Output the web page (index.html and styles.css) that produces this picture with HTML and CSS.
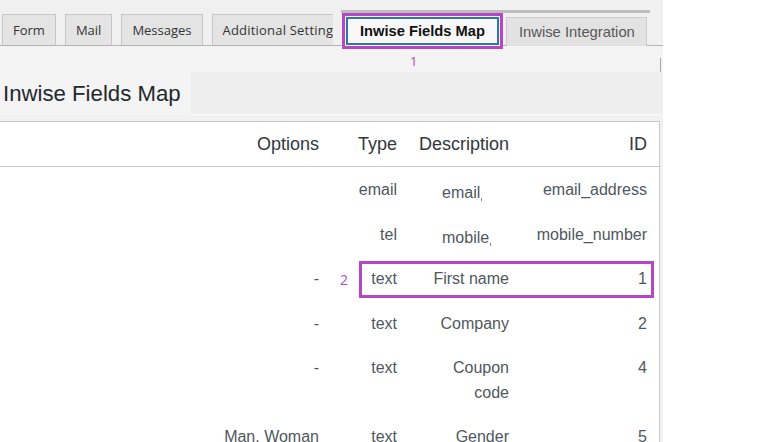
FILE: index.html
```html
<!DOCTYPE html>
<html lang="en">
<head>
<meta charset="utf-8">
<title>Inwise Fields Map</title>
<link rel="stylesheet" href="styles.css">
</head>
<body>
<div class="page">
  <div class="tabbar">
    <div class="tabs-left">
      <span class="tab">Form</span>
      <span class="tab">Mail</span>
      <span class="tab">Messages</span>
      <span class="tab tab-cut">Additional Setting</span>
    </div>
    <div class="tabs-right">
      <div class="mark-frame">
        <span class="tab-active">Inwise Fields Map</span>
      </div>
      <span class="tab-plain">Inwise Integration</span>
    </div>
  </div>
  <div class="subbar">
    <span class="marker marker-1">1</span>
    <span class="vline"></span>
  </div>
  <div class="titlerow">
    <h1 class="title">Inwise Fields Map</h1>
    <div class="title-fill"></div>
  </div>
  <div class="table-wrap">
    <table class="fields">
      <thead>
        <tr>
          <th class="c-opt">Options</th>
          <th class="c-type">Type</th>
          <th class="c-desc">Description</th>
          <th class="c-id">ID</th>
        </tr>
      </thead>
      <tbody>
        <tr>
          <td class="c-opt"></td>
          <td class="c-type">email</td>
          <td class="c-desc"><span class="edit">email</span></td>
          <td class="c-id">email_address</td>
        </tr>
        <tr>
          <td class="c-opt"></td>
          <td class="c-type">tel</td>
          <td class="c-desc"><span class="edit">mobile</span></td>
          <td class="c-id">mobile_number</td>
        </tr>
        <tr>
          <td class="c-opt">-</td>
          <td class="c-type">text</td>
          <td class="c-desc">First name</td>
          <td class="c-id">1</td>
        </tr>
        <tr>
          <td class="c-opt">-</td>
          <td class="c-type">text</td>
          <td class="c-desc">Company</td>
          <td class="c-id">2</td>
        </tr>
        <tr>
          <td class="c-opt">-</td>
          <td class="c-type">text</td>
          <td class="c-desc">Coupon code</td>
          <td class="c-id">4</td>
        </tr>
        <tr>
          <td class="c-opt">Man, Woman</td>
          <td class="c-type">text</td>
          <td class="c-desc">Gender</td>
          <td class="c-id">5</td>
        </tr>
      </tbody>
    </table>
    <span class="marker marker-2">2</span>
    <div class="highlight"></div>
  </div>
</div>
</body>
</html>
```
FILE: styles.css
```css
html, body {
  margin: 0;
  padding: 0;
  background: #ffffff;
}

.page {
  width: 663px;
  min-height: 442px;
  background: #f1f1f1;
  overflow: hidden;
  font-family: "Liberation Sans", Arial, sans-serif;
}

/* ---------- tabs ---------- */
.tabbar {
  display: flex;
  align-items: flex-end;
  height: 45px;
  border-bottom: 1px solid #b4b4b4;
  background: #f0f0f0;
}

.tabs-left {
  display: flex;
  align-items: flex-end;
  gap: 9px;
  width: 331px;
  padding-left: 2px;
  height: 45px;
  overflow: hidden;
  flex: none;
}

.tab {
  flex: none;
  box-sizing: border-box;
  height: 31px;
  padding: 0 10px;
  display: flex;
  align-items: center;
  background: #e4e4e4;
  border: 1px solid #c7c7c7;
  border-bottom: none;
  font-family: "Open Sans", "Noto Sans", sans-serif;
  font-size: 13px;
  color: #333333;
  white-space: nowrap;
}

.tab-cut {
  padding-right: 1px;
  letter-spacing: 0.2px;
}

.tabs-right {
  flex: none;
  display: flex;
  align-items: flex-start;
  gap: 3px;
  width: 309px;
  height: 32px;
  margin-left: 8px;
  align-self: flex-start;
  margin-top: 10px;
  border-top: 3px solid #bebebe;
}

.mark-frame {
  position: relative;
  z-index: 2;
  margin-left: 1px;
  box-sizing: border-box;
  height: 36px;
  padding: 1px;
  border: 3px solid #b646c3;
  background: #f4f4f4;
}

.tab-active {
  box-sizing: border-box;
  display: flex;
  align-items: center;
  height: 28px;
  padding: 0 12px 0 12px;
  border: 2px solid #2f75b5;
  background: #f8f8f8;
  font-size: 14.7px;
  font-weight: bold;
  color: #111111;
  white-space: nowrap;
}

.tab-plain {
  box-sizing: border-box;
  display: flex;
  align-items: center;
  margin-top: 4px;
  height: 29px;
  padding: 0 11px 0 12px;
  background: #e2e2e2;
  border: 1px solid #cbcbcb;
  border-bottom: none;
  font-size: 14.8px;
  color: #585858;
  white-space: nowrap;
}

/* ---------- sub bar ---------- */
.subbar {
  display: flex;
  align-items: flex-end;
  height: 26px;
  background: #f3f3f3;
}

.marker {
  font-family: "Open Sans", "Noto Sans", sans-serif;
  font-size: 13px;
  color: #b24cc0;
  line-height: 16px;
}

.marker-1 {
  margin-left: 410px;
  margin-bottom: 3px;
}

.vline {
  margin-left: auto;
  margin-right: 2px;
  width: 1px;
  height: 14px;
  background: #a8a8a8;
}

/* ---------- title ---------- */
.titlerow {
  display: flex;
  height: 43px;
  margin-bottom: 6px;
}

.title {
  margin: 0;
  box-sizing: border-box;
  width: 191px;
  height: 43px;
  padding-left: 3px;
  background: #f4f4f4;
  font-size: 22.2px;
  font-weight: normal;
  line-height: 43px;
  color: #23282d;
  white-space: nowrap;
}

.title-fill {
  flex: 1;
  background: #eeeeee;
  border-bottom: 1px solid #fbfbfb;
  height: 42px;
}

/* ---------- table ---------- */
.table-wrap {
  position: relative;
  width: 660px;
}

.fields {
  width: 660px;
  border-collapse: collapse;
  table-layout: fixed;
  background: #ffffff;
  border-top: 1px solid #c8c8c8;
  border-right: 1px solid #c8c8c8;
}

.fields th,
.fields td {
  box-sizing: border-box;
}

.fields th {
  height: 45px;
  padding: 0 16px 0 0;
  text-align: right;
  font-size: 18px;
  font-weight: normal;
  color: #32373c;
  border-bottom: 1px solid #c8c8c8;
  vertical-align: middle;
}

.fields td {
  padding: 11px 16px 9px 0;
  text-align: right;
  vertical-align: top;
  font-size: 16px;
  line-height: 24.5px;
  color: #50575e;
}

.fields .c-opt { width: 335px; }
.fields .c-type { width: 78px; }
.fields .c-desc { width: 112px; }
.fields .c-id { padding-right: 12px; }

.fields td.c-desc {
  padding-left: 20px;
}

.edit {
  display: inline-block;
  width: 67px;
  line-height: 18px;
  vertical-align: -3px;
  text-align: left;
}

.edit::after {
  content: "";
  display: inline-block;
  width: 1px;
  height: 3px;
  margin-left: 1px;
  background: #8a8a8a;
  vertical-align: -3px;
}

.marker-2 {
  position: absolute;
  left: 340px;
  top: 151px;
  font-size: 14px;
}

.highlight {
  position: absolute;
  left: 359px;
  top: 140px;
  width: 295px;
  height: 37px;
  box-sizing: border-box;
  border: 3px solid #b646c3;
}
```
